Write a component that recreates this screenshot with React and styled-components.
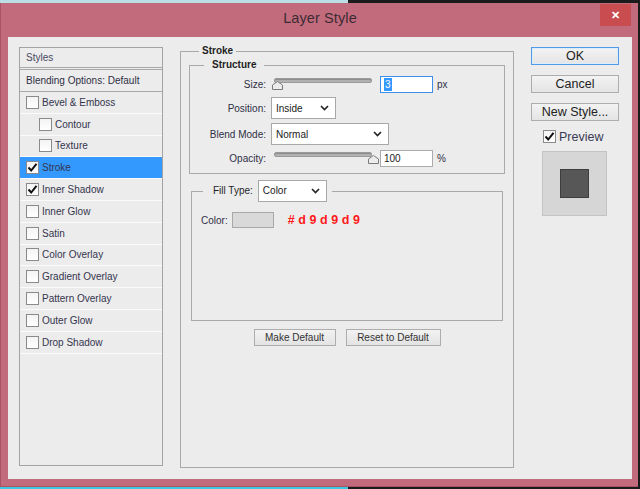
import React from 'react';
import styled, { createGlobalStyle } from 'styled-components';

const GlobalStyle = createGlobalStyle`
	html, body {
		margin: 0;
		padding: 0;
		background: #1b1b1b;
	}
	body {
		font-family: "Liberation Sans", Tahoma, Arial, sans-serif;
	}
	* {
		box-sizing: border-box;
	}
`;

const styleItems = [
	{ label: 'Bevel & Emboss', checked: false },
	{ label: 'Contour', checked: false, indent: true },
	{ label: 'Texture', checked: false, indent: true },
	{ label: 'Stroke', checked: true, active: true },
	{ label: 'Inner Shadow', checked: true },
	{ label: 'Inner Glow', checked: false },
	{ label: 'Satin', checked: false },
	{ label: 'Color Overlay', checked: false },
	{ label: 'Gradient Overlay', checked: false },
	{ label: 'Pattern Overlay', checked: false },
	{ label: 'Outer Glow', checked: false },
	{ label: 'Drop Shadow', checked: false },
];

function Check({ checked }) {
	return (
		<CheckBox>
			{checked && (
				<svg width="11" height="11" viewBox="0 0 11 11">
					<polyline points="1.5,5.5 4.2,8.5 9.5,1.8" fill="none" stroke="#111" strokeWidth="2" />
				</svg>
			)}
		</CheckBox>
	);
}

function Chevron() {
	return (
		<svg width="9" height="6" viewBox="0 0 9 6">
			<polyline points="1,1 4.5,4.6 8,1" fill="none" stroke="#222" strokeWidth="1.6" />
		</svg>
	);
}

function Dropdown({ value, width }) {
	return (
		<Select $width={width}>
			<span>{value}</span>
			<Chevron />
		</Select>
	);
}

function Slider({ value }) {
	// thumb travels along the track, 0..1
	return (
		<SliderWrap>
			<Track />
			<Thumb style={{ left: `${1 + value * 96}px` }} width="11" height="9" viewBox="0 0 11 9">
				<polygon points="0.5,4 5.5,0.5 10.5,4 10.5,8.5 0.5,8.5" fill="#ececec" stroke="#7c7c7c" />
			</Thumb>
		</SliderWrap>
	);
}

export default function App() {
	return (
		<Screen>
			<GlobalStyle />
			<Strip $left="#bcdfe6" />
			<Window>
				<TitleBar>
					<span />
					<Title>Layer Style</Title>
					<CloseButton>✕</CloseButton>
				</TitleBar>
				<Body>
					<StyleList>
						<ListHeader>Styles</ListHeader>
						<BlendRow>Blending Options: Default</BlendRow>
						{styleItems.map((item) => (
							<StyleRow key={item.label} $active={item.active} $indent={item.indent}>
								<Check checked={item.checked} />
								<span>{item.label}</span>
							</StyleRow>
						))}
					</StyleList>

					<Middle>
						<OuterGroup>
							<GroupTitle>Stroke</GroupTitle>
							<Structure>
								<SubTitle>Structure</SubTitle>
								<FieldRow $h={18}>
									<Label>Size:</Label>
									<Slider value={0} />
									<NumberBox $focused>
										<Selected>3</Selected>
									</NumberBox>
									<Unit>px</Unit>
								</FieldRow>
								<FieldRow $h={22}>
									<Label>Position:</Label>
									<Dropdown value="Inside" width={65} />
								</FieldRow>
								<FieldRow $h={22}>
									<Label>Blend Mode:</Label>
									<Dropdown value="Normal" width={118} />
								</FieldRow>
								<FieldRow $h={18}>
									<Label>Opacity:</Label>
									<Slider value={1} />
									<NumberBox>100</NumberBox>
									<Unit>%</Unit>
								</FieldRow>
							</Structure>

							<FillGroup>
								<FillLegend>
									<span>Fill Type:</span>
									<Dropdown value="Color" width={69} />
								</FillLegend>
								<ColorRow>
									<span>Color:</span>
									<Swatch />
									<HexNote>#d9d9d9</HexNote>
								</ColorRow>
							</FillGroup>

							<DefaultsRow>
								<SmallButton $width={82}>Make Default</SmallButton>
								<SmallButton $width={95}>Reset to Default</SmallButton>
							</DefaultsRow>
						</OuterGroup>
					</Middle>

					<Side>
						<DialogButton $primary>OK</DialogButton>
						<DialogButton>Cancel</DialogButton>
						<DialogButton>New Style...</DialogButton>
						<PreviewToggle>
							<Check checked />
							<span>Preview</span>
						</PreviewToggle>
						<PreviewBox>
							<PreviewSquare />
						</PreviewBox>
					</Side>
				</Body>
			</Window>
			<Strip $left="#3fc6e0" $h={2} />
		</Screen>
	);
}

const Screen = styled.div`
	width: 640px;
	height: 489px;
	display: flex;
	flex-direction: column;
	overflow: hidden;
	background: #1b1b1b;
`;

const Strip = styled.div`
	height: ${(p) => p.$h || 3}px;
	flex-shrink: 0;
	background: linear-gradient(to right, ${(p) => p.$left} 0 348px, #1b1b1b 348px);
`;

const Window = styled.div`
	flex: 1;
	display: flex;
	flex-direction: column;
	margin-right: 2px;
	background: #c26b7d;
	border-left: 1px solid #a65466;
	border-bottom: 1px solid #a65466;
	padding: 0 6px 7px 7px;
`;

const TitleBar = styled.div`
	height: 34px;
	display: grid;
	grid-template-columns: 1fr auto 1fr;
	align-items: start;
`;

const Title = styled.div`
	padding-top: 7px;
	font-size: 14.5px;
	line-height: 17px;
	color: #3b2b33;
	letter-spacing: 0.1px;
`;

const CloseButton = styled.div`
	justify-self: end;
	margin-top: 1px;
	width: 31px;
	height: 22px;
	background: #c94c50;
	color: #fff;
	font-size: 11px;
	font-weight: bold;
	display: flex;
	align-items: center;
	justify-content: center;
	margin-right: 1px;
`;

const Body = styled.div`
	flex: 1;
	background: #ececec;
	display: flex;
	align-items: flex-start;
	gap: 17px;
	padding: 10px 13px 0 11px;
	font-size: 10px;
	color: #2f2f45;
`;

const StyleList = styled.div`
	width: 144px;
	height: 419px;
	flex-shrink: 0;
	border: 1px solid #a3a3a3;
	display: flex;
	flex-direction: column;
`;

const ListHeader = styled.div`
	height: 22px;
	padding-left: 6px;
	display: flex;
	align-items: center;
	color: #4a4a62;
	border-bottom: 3px double #a9a9a9;
`;

const BlendRow = styled.div`
	height: 22px;
	padding-left: 6px;
	display: flex;
	align-items: center;
	border-bottom: 1px solid #a9a9a9;
	color: #2f2f45;
`;

const StyleRow = styled.div`
	height: 21.8px;
	flex-shrink: 0;
	display: flex;
	align-items: center;
	gap: 3px;
	padding-left: ${(p) => (p.$indent ? 19 : 6)}px;
	border-bottom: 1px solid #fbfbfb;
	background: ${(p) => (p.$active ? '#3399ff' : 'transparent')};
	color: #35354e;
`;

const CheckBox = styled.span`
	width: 13px;
	height: 13px;
	flex-shrink: 0;
	border: 1px solid #8a8a8a;
	background: linear-gradient(#f4f4f4, #ffffff);
	display: flex;
	align-items: center;
	justify-content: center;
`;

const Middle = styled.div`
	width: 334px;
	flex-shrink: 0;
`;

const OuterGroup = styled.fieldset`
	margin: 0;
	height: 421px;
	border: 1px solid #a9a9a9;
	padding: 6px 8px 0 8px;
	min-inline-size: 0;
`;

const GroupTitle = styled.legend`
	margin-left: 10px;
	padding: 0 3px;
	font-weight: bold;
	line-height: 8px;
	color: #1f1f1f;
`;

const Structure = styled.fieldset`
	margin: 0;
	border: 1px solid #a9a9a9;
	padding: 6px 0 6px 0;
	display: flex;
	flex-direction: column;
	gap: 4px;
	min-inline-size: 0;
`;

const SubTitle = styled.legend`
	margin-left: 14px;
	padding: 0 8px;
	font-weight: bold;
	line-height: 8px;
	color: #1f1f1f;
`;

const FieldRow = styled.div`
	height: ${(p) => p.$h}px;
	display: flex;
	align-items: center;
`;

const Label = styled.span`
	width: 76px;
	margin-right: 5px;
	text-align: right;
	color: #2f2f45;
`;

const SliderWrap = styled.div`
	position: relative;
	width: 104px;
	height: 18px;
	margin-right: 5px;
`;

const Track = styled.div`
	position: absolute;
	left: 3px;
	top: 3px;
	width: 98px;
	height: 5px;
	border-radius: 2px;
	background: #b4b4b4;
	border: 1px solid #9a9a9a;
	box-shadow: inset 0 1px 1px #8a8a8a;
`;

const Thumb = styled.svg`
	position: absolute;
	top: 6px;
`;

const NumberBox = styled.div`
	width: 53px;
	height: 17px;
	background: #fff;
	border: 1px solid ${(p) => (p.$focused ? '#3c8ee6' : '#acacac')};
	padding-left: 3px;
	display: flex;
	align-items: center;
	color: #222;
`;

const Selected = styled.span`
	background: #3399ff;
	color: #fff;
	padding: 0 1px;
	line-height: 13px;
`;

const Unit = styled.span`
	margin-left: 4px;
	color: #2f2f45;
`;

const Select = styled.div`
	width: ${(p) => p.$width}px;
	height: 22px;
	background: #fff;
	border: 1px solid #a8a8a8;
	display: flex;
	align-items: center;
	justify-content: space-between;
	padding: 0 6px 0 4px;
	color: #222;
	font-size: 10px;
`;

const FillGroup = styled.fieldset`
	margin: 6px 2px 0 2px;
	height: 141px;
	border: 1px solid #a9a9a9;
	padding: 0 0 0 9px;
	min-inline-size: 0;
`;

const FillLegend = styled.legend`
	margin-left: 2px;
	padding: 0 5px 0 10px;
	display: flex;
	align-items: center;
	gap: 5px;
	color: #1f1f1f;
	line-height: 12px;
`;

const ColorRow = styled.div`
	margin-top: 10px;
	height: 16px;
	display: flex;
	align-items: center;
	color: #2f2f45;
`;

const Swatch = styled.div`
	width: 42px;
	height: 16px;
	margin-left: 4px;
	background: #d9d9d9;
	border: 1px solid #a8a8a8;
`;

const HexNote = styled.span`
	margin-left: 14px;
	color: #ff1a1a;
	font-weight: bold;
	font-size: 12.5px;
	letter-spacing: 3.6px;
`;

const DefaultsRow = styled.div`
	margin-top: 8px;
	display: flex;
	justify-content: center;
	gap: 10px;
`;

const SmallButton = styled.div`
	width: ${(p) => p.$width}px;
	height: 17px;
	border: 1px solid #adadad;
	background: linear-gradient(#f2f2f2, #e3e3e3);
	display: flex;
	align-items: center;
	justify-content: center;
	color: #333;
	font-size: 10px;
`;

const Side = styled.div`
	width: 88px;
	flex-shrink: 0;
	display: flex;
	flex-direction: column;
	gap: 10px;
`;

const DialogButton = styled.div`
	height: 18px;
	border: 1px solid ${(p) => (p.$primary ? '#4f9be8' : '#adadad')};
	background: linear-gradient(#f3f3f3, #e4e4e4);
	box-shadow: ${(p) => (p.$primary ? 'inset 0 0 0 1px #dcecfc' : 'none')};
	display: flex;
	align-items: center;
	justify-content: center;
	font-size: 12.5px;
	color: #222;
`;

const PreviewToggle = styled.div`
	margin-top: -1px;
	padding-left: 12px;
	height: 13px;
	display: flex;
	align-items: center;
	gap: 3px;
	font-size: 12.5px;
	color: #3a3a55;
`;

const PreviewBox = styled.div`
	margin-left: 11px;
	margin-top: -2px;
	width: 65px;
	height: 65px;
	background: #d6d6d6;
	border: 1px solid #c4c4c4;
	display: flex;
	align-items: center;
	justify-content: center;
`;

const PreviewSquare = styled.div`
	width: 29px;
	height: 29px;
	background: #575757;
	border: 1px solid #3e3e3e;
`;
